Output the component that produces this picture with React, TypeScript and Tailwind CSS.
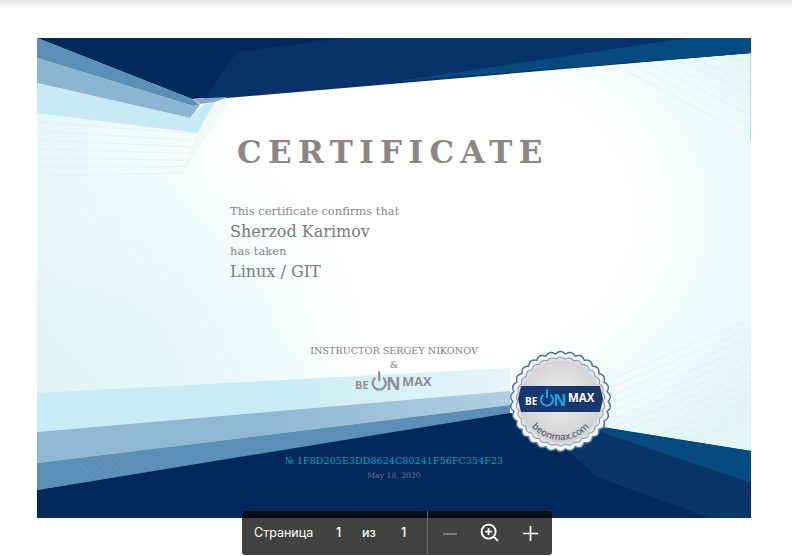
import React from 'react'
import { ZoomIn } from 'lucide-react'

const serif = 'font-["DejaVu_Serif",serif]'

const range = (n: number) => Array.from({ length: n }, (_, i) => i)

/* wavy edge of the seal */
const scallop = (cx: number, cy: number, r: number, amp: number, n: number) => {
  const pts = range(720).map((i) => {
    const t = (i / 720) * Math.PI * 2
    const rr = r + amp * Math.abs(Math.sin((n * t) / 2))
    return `${(cx + rr * Math.cos(t)).toFixed(2)},${(cy + rr * Math.sin(t)).toFixed(2)}`
  })
  return `M${pts.join('L')}Z`
}

const Lines = () => (
  <g fill="none" stroke="#dfe9ea" strokeWidth="0.8" opacity="0.6">
    {/* top left */}
    {range(7).map((i) => (
      <polyline key={i} points={`37,${122 + i * 9} ${197 - i * 2.5},${134 + i * 6.5} ${213 + i * 2.3},${103}`} />
    ))}
    {/* top right */}
    {range(9).map((i) => (
      <line key={i} x1={610 + i * 16} y1={62 - i} x2={760} y2={142 - i * 11} />
    ))}
    {/* bottom right */}
    {range(12).map((i) => (
      <line key={i} x1={600} y1={384 + i * 8} x2={751} y2={319 + i * 9} />
    ))}
  </g>
)

const BottomLeftLines = ({ color, opacity }: { color: string; opacity: number }) => (
  <g fill="none" stroke={color} strokeWidth="0.8" opacity={opacity}>
    {range(16).map((i) => (
      <line key={i} x1={37} y1={312 + i * 7} x2={112 + i * 2.7} y2={312 + i * 7 + 1.08 * (75 + i * 2.7)} />
    ))}
  </g>
)

/* x,y is the baseline start of "BE" */
const Logo = ({ x, y, scale, main, accent }: { x: number; y: number; scale: number; main: string; accent: string }) => (
  <g transform={`translate(${x} ${y}) scale(${scale})`} className="font-['Open_Sans',sans-serif]" fontWeight="700">
    <text x="0" y="0" fontSize="10" fill={main}>
      BE
    </text>
    <path d="M18.5 -10.2 A6 6 0 1 0 25.5 -10.2" fill="none" stroke={accent} strokeWidth="2" />
    <line x1="22" y1="-16" x2="22" y2="-7" stroke={accent} strokeWidth="2" />
    <text x="28.5" y="1" fontSize="16" fill={accent}>
      N
    </text>
    <text x="43" y="-3" fontSize="11.5" fill={main}>
      MAX
    </text>
  </g>
)

const CertificateArt = () => (
  <svg className="absolute inset-0" width="714" height="480" viewBox="37 38 714 480">
    <defs>
      <radialGradient id="paper" cx="410" cy="215" r="420" gradientUnits="userSpaceOnUse" gradientTransform="translate(410 215) scale(1 0.72) translate(-410 -215)">
        <stop offset="0.5" stopColor="#ffffff" />
        <stop offset="1" stopColor="#e2f6f6" />
      </radialGradient>
      <radialGradient id="wash" cx="110" cy="370" r="270" gradientUnits="userSpaceOnUse">
        <stop offset="0.2" stopColor="#e2f6f6" stopOpacity="0.9" />
        <stop offset="1" stopColor="#e2f6f6" stopOpacity="0" />
      </radialGradient>
      <radialGradient id="silver" cx="0.5" cy="0.45" r="0.55">
        <stop offset="0" stopColor="#efefef" />
        <stop offset="1" stopColor="#cfcfcf" />
      </radialGradient>
      <linearGradient id="lightBand" x1="0" y1="0" x2="1" y2="0">
        <stop offset="0.5" stopColor="#c8ecf5" />
        <stop offset="1" stopColor="#e6f5f9" />
      </linearGradient>
      <linearGradient id="midBand" x1="0" y1="0" x2="1" y2="0">
        <stop offset="0.5" stopColor="#8fb8d3" />
        <stop offset="1" stopColor="#afcfe2" />
      </linearGradient>
    </defs>
    <rect x="37" y="38" width="714" height="480" fill="url(#paper)" />
    <rect x="37" y="100" width="400" height="320" fill="url(#wash)" />
    <Lines />
    <BottomLeftLines color="#dfe9ea" opacity={0.7} />

    {/* top */}
    <polygon points="37,38 751,38 751,53 192,99" fill="#03285c" />
    <polygon points="237,52 343,38 751,38 751,53 203,100" fill="#08326a" />
    <polygon points="687,38 751,38 751,53 400,81" fill="#064a80" />
    <polygon points="37,38 192,99 200,105 193,106 37,58" fill="#5b90b6" />
    <polygon points="37,58 193,106 200,105 190,118 37,83" fill="#8ab6d3" />
    <polygon points="37,83 190,118 203,105 215,102 197,133 37,113" fill="#c6e9f3" />
    <polygon points="192,99 228,97 215,102 200,104" fill="#8aa9c6" />
    <line x1="750.5" y1="54" x2="750.5" y2="140" stroke="#a9dcec" strokeWidth="1" />

    {/* bottom */}
    <polygon points="37,393 510,368 510,392 37,432" fill="url(#lightBand)" />
    <polygon points="37,432 510,391 510,405 37,463" fill="url(#midBand)" />
    <polygon points="37,463 510,405 510,414 37,490" fill="#5c8fb5" />
    <BottomLeftLines color="#ffffff" opacity={0.1} />
    <polygon points="37,490 510,413 751,451 751,518 37,518" fill="#03285c" />
    <polygon points="567,450 597,477 710,518 751,518 751,483 600,432" fill="#0a3568" />
    <polygon points="603,427 751,451 751,483 600,432" fill="#064a80" />

    {/* seal */}
    <path d={scallop(560.5, 401.5, 47.6, 2.4, 30)} fill="#f4f6f8" stroke="#47769f" strokeWidth="1.5" />
    <path d={scallop(560.5, 401.5, 42.6, 1.9, 30)} fill="#dfe2e5" stroke="#8c9eb4" strokeWidth="1.1" />
    <circle cx="560.5" cy="401.5" r="41" fill="url(#silver)" />
    <polygon points="518,399 521,386 600,386 603,399 600,412 521,412" fill="#17386f" />
    <Logo x={525} y={405} scale={1} main="#ffffff" accent="#19a5e0" />
    <path id="sealArc" d="M 526 418 A 38 38 0 0 0 595 418" fill="none" />
    <text className="font-['Open_Sans',sans-serif]" fontSize="9.5" fontWeight="600" fill="#5f6872">
      <textPath href="#sealArc" startOffset="50%" textAnchor="middle">
        beonmax.com
      </textPath>
    </text>
  </svg>
)

const Toolbar = () => (
  <div className="absolute left-[242px] top-[511px] flex h-[44px] w-[310px] flex-col overflow-hidden rounded-[3px] bg-[#424341] font-['Inter',sans-serif] text-[12.5px] text-white">
    <div className="h-[7px] bg-[#060d16]" />
    <div className="flex flex-1 items-center pb-[6px]">
      <div className="flex w-[185px] items-center pl-[12px]">
        <span className="w-[82px]">Страница</span>
        <span className="w-[26px] font-medium">1</span>
        <span className="w-[39px] font-medium">из</span>
        <span className="font-medium">1</span>
      </div>
      <div className="relative h-full w-px">
        <div className="absolute -top-[7px] h-[44px] w-px bg-[#6d6e6c]" />
      </div>
      <div className="flex flex-1 items-center pl-[15px]">
        <svg width="14" height="14" viewBox="0 0 14 14">
          <line x1="0" y1="7" x2="14" y2="7" stroke="#8c8d8b" strokeWidth="1.6" />
        </svg>
        <ZoomIn className="ml-[22px] -mt-[3px]" size={21} strokeWidth={2.2} />
        <svg className="ml-[23px]" width="15" height="15" viewBox="0 0 15 15">
          <path d="M0 7.5H15M7.5 0V15" stroke="#ffffff" strokeWidth="1.7" />
        </svg>
      </div>
    </div>
  </div>
)

const App: React.FC = () => {
  return (
    <div className="relative h-[556px] w-[792px] overflow-hidden bg-white">
      <div className="h-[9px] bg-gradient-to-b from-[#e6e6e6] to-white" />
      <div className={`relative ml-[37px] mt-[29px] h-[480px] w-[714px] ${serif}`}>
        <CertificateArt />
        <div className="relative flex h-full flex-col">
          <h1 className="mt-[95px] ml-[200px] text-[31px] font-bold leading-[38px] tracking-[6.4px] text-[#8c8685]">CERTIFICATE</h1>
          <div className="ml-[193px] mt-[31px] flex flex-col">
            <p className="text-[11.5px] leading-[18px] text-[#888888]">This certificate confirms that</p>
            <p className="text-[16px] leading-[23px] text-[#7b7b7b]">Sherzod Karimov</p>
            <p className="text-[11.5px] leading-[17px] text-[#888888]">has taken</p>
            <p className="text-[16px] leading-[23px] text-[#7b7b7b]">Linux / GIT</p>
          </div>
          <div className="mt-[61px] flex flex-col items-center text-[9.65px] leading-[14px] text-[#808080]">
            <p>INSTRUCTOR SERGEY NIKONOV</p>
            <p className="leading-[13px]">&amp;</p>
            <svg width="90" height="24" viewBox="0 0 90 24">
              <Logo x={6} y={18} scale={1.1} main="#8f8f92" accent="#8f8f92" />
            </svg>
          </div>
          <div className="mt-[59px] flex flex-col items-center">
            <p className="text-[9.65px] leading-[14px] text-[#0a9fcb]">№ 1F8D205E3DD8624C80241F56FC354F23</p>
            <p className="mt-[2px] text-[7.7px] leading-[12px] text-[#6a7380]">May 18, 2020</p>
          </div>
        </div>
      </div>
      <Toolbar />
    </div>
  )
}

export default App
